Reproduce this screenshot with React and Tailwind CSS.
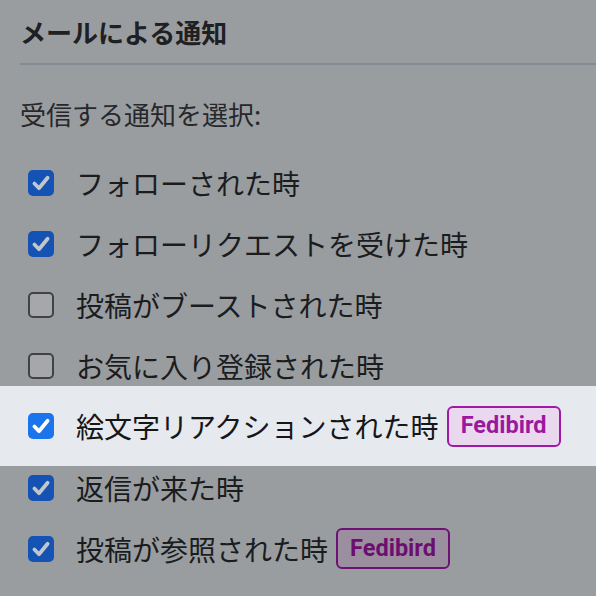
import React from "react";

const font = { fontFamily: '"Noto Sans CJK JP", "Noto Sans", sans-serif' };

function Check({ checked, hi }) {
  if (!checked) {
    return (
      <div className="w-[26px] h-[26px] rounded-[5px] border-2 border-[#404246] bg-[#a5a7aa] shrink-0" />
    );
  }
  return (
    <div
      className={`w-[26px] h-[26px] rounded-[5px] shrink-0 flex items-center justify-center ${
        hi ? "bg-[#1a74ec]" : "bg-[#1453b3]"
      }`}
    >
      <svg width="22" height="22" viewBox="0 0 20 20">
        <path
          d="M4 10.5 L8.2 14.8 L16 5.2"
          fill="none"
          stroke={hi ? "#ffffff" : "#c3c6ca"}
          strokeWidth="3.4"
          strokeLinecap="round"
          strokeLinejoin="round"
        />
      </svg>
    </div>
  );
}

function Badge({ hi }) {
  return (
    <span
      className={`ml-[8px] inline-flex items-center justify-center w-[114px] h-[41px] rounded-[6px] border-2 text-[23.5px] font-bold ${
        hi
          ? "bg-[#ead9ee] border-[#a01aa8] text-[#9b189e]"
          : "bg-[#9b8f9f] border-[#6d1272] text-[#6b0e6f]"
      }`}
      style={{ fontFamily: 'Roboto, "Noto Sans", sans-serif' }}
    >
      Fedibird
    </span>
  );
}

const rows = [
  { label: "フォローされた時", checked: true },
  { label: "フォローリクエストを受けた時", checked: true },
  { label: "投稿がブーストされた時", checked: false },
  { label: "お気に入り登録された時", checked: false },
  { label: "絵文字リアクションされた時", checked: true, badge: true, hi: true },
  { label: "返信が来た時", checked: true },
  { label: "投稿が参照された時", checked: true, badge: true },
];

export default function App() {
  return (
    <div className="w-[596px] h-[596px] overflow-hidden bg-[#9a9da0]" style={font}>
      <div className="h-[63px] flex items-center pl-5">
        <h3 className="text-[26px] font-bold text-[#1e2023] leading-none">
          メールによる通知
        </h3>
      </div>
      <div className="ml-5 h-[2px] bg-[#858b93]" />
      <div className="pt-[31px] pb-[20px] pl-5 h-[87px]">
        <p className="text-[26px] leading-[36px] text-[#26282b]">受信する通知を選択:</p>
      </div>
      <div className="flex flex-col">
        {rows.map((r, i) =>
          r.hi ? (
            <div
              key={i}
              className="h-[80px] -mt-[10px] -mb-[9px] bg-[#e6e9ed] flex items-center pl-[28px] relative z-10"
            >
              <Check checked={r.checked} hi />
              <span className="ml-[22px] text-[28px] leading-none text-[#151618] whitespace-nowrap">
                {r.label}
              </span>
              {r.badge && <Badge hi />}
            </div>
          ) : (
            <div key={i} className="h-[61px] flex items-center pl-[28px]">
              <Check checked={r.checked} />
              <span className="ml-[22px] text-[28px] leading-none text-[#1b1c1e] whitespace-nowrap">
                {r.label}
              </span>
              {r.badge && <Badge />}
            </div>
          )
        )}
      </div>
    </div>
  );
}
